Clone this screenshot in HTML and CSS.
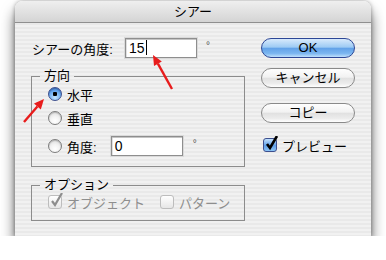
FILE: index.html
```html
<!DOCTYPE html>
<html lang="ja">
<head>
<meta charset="utf-8">
<title>シアー</title>
<link rel="stylesheet" href="styles.css">
</head>
<body>
<div class="dialog">
  <div class="titlebar">シアー</div>
  <div class="content">
    <div class="main">
      <div class="angle-row">
        <label class="field-label" for="shear">シアーの角度:</label>
        <div class="textbox angle-box" id="shear">15<span class="caret"></span></div>
        <span class="degree">°</span>
      </div>

      <fieldset class="group axis">
        <legend>方向</legend>
        <div class="radio-row row1"><span class="radio on"></span>水平</div>
        <div class="radio-row row2"><span class="radio"></span>垂直</div>
        <div class="radio-row row3"><span class="radio"></span>角度:<div class="textbox axis-box">0</div><span class="degree small">°</span></div>
      </fieldset>

      <fieldset class="group options">
        <legend>オプション</legend>
        <div class="check-row">
          <span class="check disabled"><svg viewBox="0 0 16 16" width="16" height="16"><path d="M3 8 L6 12 L13 0" fill="none" stroke="#8d8d8d" stroke-width="2.2"/></svg></span>
          <span class="dim">オブジェクト</span>
          <span class="check disabled second"></span>
          <span class="dim">パターン</span>
        </div>
      </fieldset>
    </div>

    <div class="side">
      <div class="btn default">OK</div>
      <div class="btn cancel">キャンセル</div>
      <div class="btn copy">コピー</div>
      <div class="check-row preview">
        <span class="check on"><svg viewBox="0 0 16 16" width="16" height="16"><path d="M3 8 L6 12 L13 0" fill="none" stroke="#000" stroke-width="2.6"/></svg></span>
        プレビュー
      </div>
    </div>
  </div>

  <svg class="arrows" width="356" height="235" viewBox="0 0 356 235">
    <line x1="157" y1="88" x2="142.9" y2="62.7" stroke="#e81c1c" stroke-width="2.4"/>
    <polygon points="138,54 146.8,60.5 139,64.9" fill="#e81c1c"/>
    <line x1="9" y1="121" x2="22.4" y2="105.5" stroke="#e81c1c" stroke-width="2.4"/>
    <polygon points="29,98 25.8,108.5 19,102.6" fill="#e81c1c"/>
  </svg>
</div>
</body>
</html>
```

FILE: styles.css
```css
body {
	margin: 0;
	background: #ffffff;
}

.dialog {
	position: relative;
	width: 356px;
	height: 235px;
	margin: 1px 0 0 15px;
	border-radius: 8px 8px 0 0;
	background: repeating-linear-gradient(to bottom, #f1f1f1 0 2px, #e9e9e9 2px 4px);
	box-shadow: 0 10px 14px rgba(0, 0, 0, 0.62), 0 0 4px rgba(0, 0, 0, 0.35);
	font-family: "Liberation Sans", "Noto Sans CJK JP", sans-serif;
	font-size: 13px;
	color: #000;
}

.titlebar {
	height: 21px;
	line-height: 21px;
	text-align: center;
	border-bottom: 1px solid #8f8f8f;
	border-radius: 8px 8px 0 0;
	background: linear-gradient(#efefef, #d4d4d4);
}

.content {
	display: flex;
	gap: 16px;
	padding: 15px 0 0 16px;
}

.main {
	width: 214px;
}

.angle-row {
	display: flex;
	align-items: center;
	height: 20px;
}

.field-label {
	width: 93px;
	padding-left: 1px;
}

.textbox {
	box-sizing: border-box;
	height: 20px;
	line-height: 18px;
	padding-left: 3px;
	background: #fff;
	border: 1px solid #8e8e8e;
	box-shadow: inset 0 1px 0 #c4c4c4, inset 1px 0 0 #e0e0e0, 0 0 0 1px #dadada;
	font-size: 14px;
}

.angle-box {
	width: 72px;
}

.caret {
	display: inline-block;
	width: 1px;
	height: 15px;
	margin-left: 1px;
	vertical-align: -2px;
	background: #000;
}

.degree {
	margin-left: 9px;
	margin-top: -6px;
	font-size: 10px;
	color: #555;
}

.group {
	margin: 11px 0 0;
	padding: 0 0 10px 0;
	border: 1px solid #8c8c8c;
}

.group legend {
	margin-left: 8px;
	padding: 0 4px;
	line-height: 14px;
}

.radio-row {
	display: flex;
	align-items: center;
	height: 20px;
	margin-left: 16px;
}

.row1 { margin-top: 1px; }
.row2 { margin-top: 4px; }
.row3 { margin-top: 8px; }

.radio {
	box-sizing: border-box;
	width: 14px;
	height: 14px;
	margin-right: 5px;
	border-radius: 50%;
	border: 1px solid #7d7d7d;
	background: radial-gradient(circle at 50% 75%, #ffffff 0, #f4f4f4 40%, #d4d4d4 100%);
	box-shadow: inset 0 1px 1px rgba(0, 0, 0, 0.2);
}

.radio.on {
	border-color: #3d4f8e;
	background: radial-gradient(circle at 50% 50%, #000 0 2px, transparent 2.5px),
		radial-gradient(circle at 50% 80%, #c6e6ff 0, #6aaaf0 55%, #2f68c0 100%);
}

.axis-box {
	width: 72px;
	margin-left: 14px;
}

.degree.small {
	margin-left: 10px;
}

.options {
	margin-top: 11px;
	padding-bottom: 10px;
}

.check-row {
	display: flex;
	align-items: center;
	height: 16px;
	margin: 2px 0 0 16px;
}

.check {
	position: relative;
	box-sizing: border-box;
	width: 14px;
	height: 14px;
	margin-right: 5px;
	border-radius: 3px;
	border: 1px solid #bdbdbd;
	background: linear-gradient(#ffffff, #e6e6e6);
}

.check svg {
	position: absolute;
	left: 0;
	top: -3px;
}

.check.second {
	margin-left: 15px;
}

.check.on {
	border-color: #3d4f8e;
	background: linear-gradient(#c3e2ff, #5f9fe8 55%, #8cc4f6);
}

.dim {
	color: #8e8e8e;
}

.side {
	display: flex;
	flex-direction: column;
	width: 94px;
}

.btn {
	box-sizing: border-box;
	height: 20px;
	line-height: 18px;
	text-align: center;
	border-radius: 10px;
	border: 1px solid #8a8a8a;
	background: linear-gradient(#fefefe 0%, #f2f2f2 45%, #e1e1e1 52%, #ececec 80%, #ffffff 100%);
}

.btn.default {
	border-color: #2d4796;
	background: linear-gradient(#d8eafc 0%, #9ecbf4 45%, #63a2e8 52%, #7bb6f0 80%, #bfe0fc 100%);
}

.btn.cancel {
	margin-top: 10px;
}

.btn.copy {
	margin-top: 15px;
}

.preview {
	margin: 14px 0 0 2px;
}

.arrows {
	position: absolute;
	left: 0;
	top: 0;
	pointer-events: none;
}
```
